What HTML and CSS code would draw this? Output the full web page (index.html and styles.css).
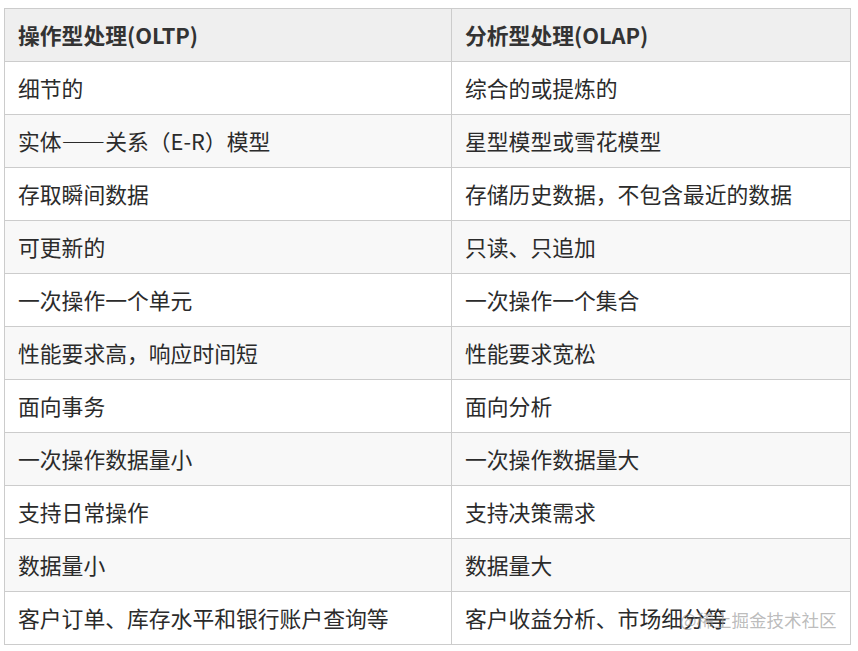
FILE: index.html
```html
<!DOCTYPE html>
<html lang="zh">
<head>
<meta charset="utf-8">
<link rel="stylesheet" href="styles.css">
</head>
<body>
<div class="wrap">
<table class="cmp">
<thead>
<tr><th class="c1">操作型处理(OLTP)</th><th class="c2">分析型处理(OLAP)</th></tr>
</thead>
<tbody>
<tr><td>细节的</td><td>综合的或提炼的</td></tr>
<tr><td>实体<span class="dash">——</span>关系（E-R）模型</td><td>星型模型或雪花模型</td></tr>
<tr><td>存取瞬间数据</td><td>存储历史数据，不包含最近的数据</td></tr>
<tr><td>可更新的</td><td>只读、只追加</td></tr>
<tr><td>一次操作一个单元</td><td>一次操作一个集合</td></tr>
<tr><td>性能要求高，响应时间短</td><td>性能要求宽松</td></tr>
<tr><td>面向事务</td><td>面向分析</td></tr>
<tr><td>一次操作数据量小</td><td>一次操作数据量大</td></tr>
<tr><td>支持日常操作</td><td>支持决策需求</td></tr>
<tr><td>数据量小</td><td>数据量大</td></tr>
<tr><td>客户订单、库存水平和银行账户查询等</td><td>客户收益分析、市场细分等</td></tr>
</tbody>
</table>
<div class="watermark">@稀土掘金技术社区</div>
</div>
</body>
</html>
```
FILE: styles.css
```css
html, body {
  margin: 0;
  padding: 0;
  background: #fff;
}
body {
  font-family: "Noto Sans CJK SC", "Noto Sans", sans-serif;
  color: #2b2b2b;
}
.wrap {
  position: relative;
  padding: 8px 0 0 4px;
  width: 846px;
}
.cmp {
  border-collapse: collapse;
  width: 846px;
  table-layout: fixed;
}
.cmp th, .cmp td {
  border: 1px solid #ccc;
  height: 53px;
  padding: 0 13px;
  font-size: 21.8px;
  line-height: 1.3;
  text-align: left;
  vertical-align: middle;
  box-sizing: border-box;
  white-space: nowrap;
}
.cmp th {
  background: #efefef;
  font-weight: bold;
  color: #333;
}
.cmp th.c1 { width: 447px; }
.cmp th.c2 { width: 399px; }
.cmp tbody tr:nth-child(even) td {
  background: #f8f8f8;
}
.dash {
  font-weight: bold;
}
.watermark {
  position: absolute;
  left: 680px;
  top: 607px;
  font-size: 17.5px;
  color: rgba(150, 150, 150, 0.65);
  white-space: nowrap;
  pointer-events: none;
}
```
